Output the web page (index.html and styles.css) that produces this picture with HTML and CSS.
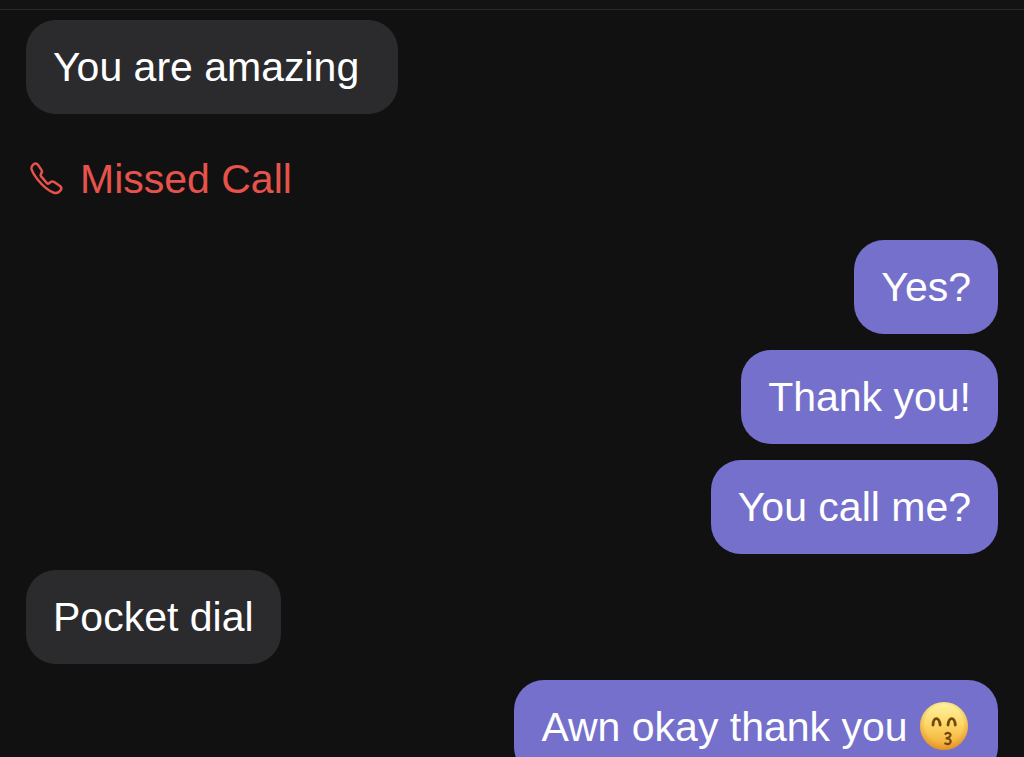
FILE: index.html
```
<!DOCTYPE html>
<html lang="en">
  <head>
    <meta charset="utf-8">
    <title>Messages</title>
    <meta name="viewport" content="width=device-width, initial-scale=1">
    <link rel="stylesheet" href="styles.css">
  </head>
  <body>
    <header class="top-bar"></header>

    <main class="chat">
      <p class="bubble received">You are amazing&nbsp;</p>

      <div class="missed-call">
        <svg class="phone-icon" viewBox="0 0 34 34" aria-hidden="true">
          <path d="M3 2.800C4.600 1 6.600 1.200 8 2.900L11.400 7.900C12.200 9.200 12.200 10 11.500 11L10.900 12C10.400 12.900 10.500 13.600 11.100 14.400L16.800 21C17.600 21.800 18.300 21.900 19.100 21.200L20.600 20C21.900 19.100 22.900 19.200 24.200 20L30 24C31.300 25 31.700 26.300 31 27.600C29.400 30.200 26.900 31.700 23.800 30.700C18 28.700 12.600 23.600 8 18C4.700 13.900 2 9.800 1.400 6.400C1.200 4.900 1.900 3.900 3 2.800Z"/>
        </svg>
        <span>Missed Call</span>
      </div>

      <p class="bubble sent">Yes?</p>
      <p class="bubble sent">Thank you!</p>
      <p class="bubble sent">You call me?</p>
      <p class="bubble received">Pocket dial</p>
      <p class="bubble sent">
        Awn okay thank you
        <svg class="emoji" viewBox="0 0 50 50" role="img" aria-label="Kissing face with smiling eyes">
          <defs>
            <linearGradient id="face" x1="0" y1="0" x2="0" y2="1">
              <stop offset="0" stop-color="#fff3a0"/>
              <stop offset="0.450" stop-color="#fcd968"/>
              <stop offset="1" stop-color="#f2a632"/>
            </linearGradient>
            <radialGradient id="edge" cx="0.500" cy="0.450" r="0.560">
              <stop offset="0.700" stop-color="#e08a1c" stop-opacity="0"/>
              <stop offset="1" stop-color="#d98018" stop-opacity="0.600"/>
            </radialGradient>
          </defs>
          <circle cx="25" cy="25" r="24" fill="url(#face)"/>
          <circle cx="25" cy="25" r="24" fill="url(#edge)"/>
          <g fill="none" stroke="#74470f" stroke-linecap="round" stroke-linejoin="round">
            <path stroke-width="2.800" d="M14 24C14.500 15.500 20 15.500 21.200 24M29 24C30 15.500 35.500 15.500 36.300 24"/>
            <path stroke-width="2.200" d="M26.500 32.800C29 31 32.300 32.400 31.300 34.900C30.700 36.300 29 36.900 27.600 37.400C30 37.400 32.600 39 31.400 41.500C30.400 43.400 28 43.200 26.300 42.500"/>
          </g>
        </svg>
      </p>
    </main>
  </body>
</html>
```

FILE: styles.css
```
* {
    box-sizing: border-box;
}

body {
    margin: 0;
    height: 100vh;
    overflow: hidden;
    background-color: #111111;
    color: #ffffff;
    font-family: "Liberation Sans", Arial, sans-serif;
    font-size: 41px;
    line-height: 46px;
}

.top-bar {
    height: 10px;
    background-color: #131313;
    border-bottom: 1px solid #292929;
}

.chat {
    display: flex;
    flex-direction: column;
    gap: 16px;
    padding: 10px 26px;
}

.bubble {
    margin: 0;
    padding: 24px 27px;
    border-radius: 30px;
    max-width: 80%;
}

.received {
    align-self: flex-start;
    background-color: #2b2b2d;
}

.sent {
    align-self: flex-end;
    background-color: #7570cb;
}

.missed-call {
    display: flex;
    align-items: center;
    gap: 16px;
    padding: 26px 4px 22px;
    color: #e5534b;
}

.phone-icon {
    width: 34px;
    height: 34px;
    overflow: visible;
    fill: none;
    stroke: currentColor;
    stroke-width: 2.5;
    stroke-linejoin: round;
}

.emoji {
    width: 50px;
    height: 50px;
    margin: -6px 2px 2px 0;
    vertical-align: middle;
}
```
